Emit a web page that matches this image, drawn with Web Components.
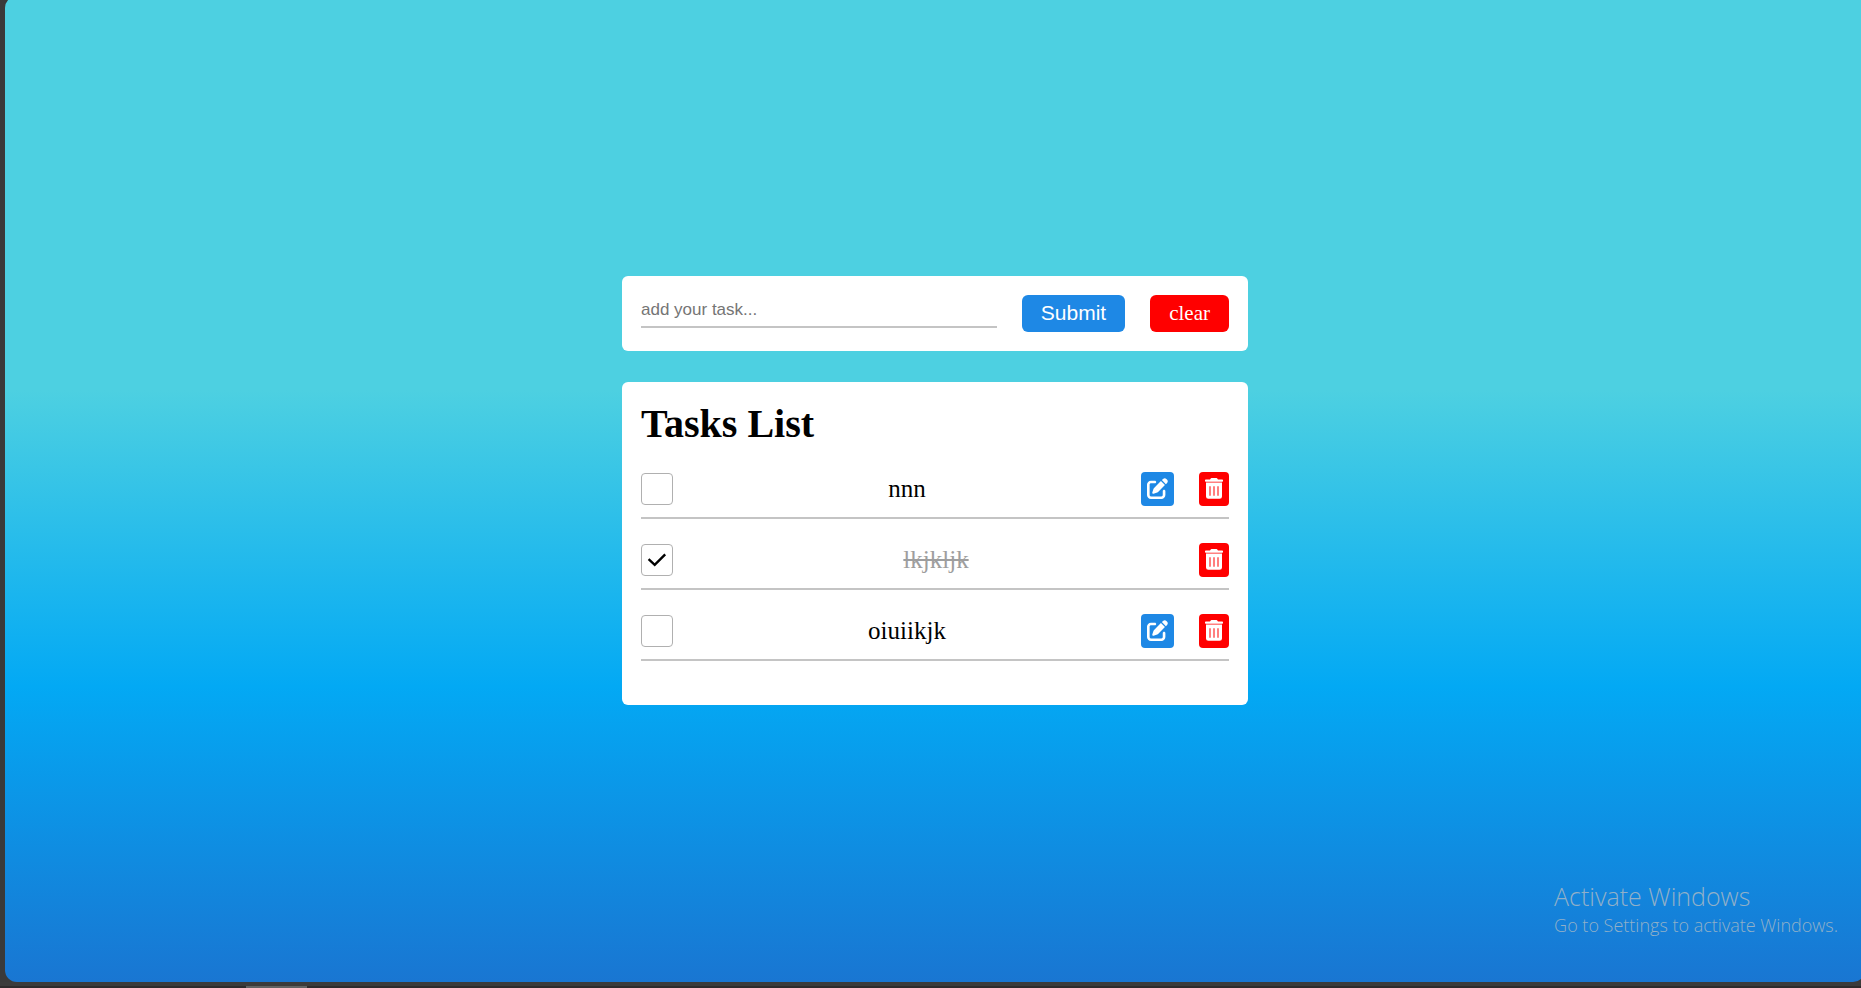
<!DOCTYPE html>
<html lang="en">
<head>
<meta charset="utf-8">
<title>Tasks List</title>
<style>
html { height: 100%; }
body {
  margin: 0;
  min-height: 100%;
  display: flex;
  overflow: hidden;
  background: #3a3a3a;
  font-family: "Liberation Serif", "Times New Roman", serif;
  color: #000;
}
</style>
</head>
<body>
<task-app></task-app>

<script>
const define = (name, html, Base = HTMLElement) => {
  const template = document.createElement("template");
  template.innerHTML = html;
  customElements.define(name, class extends Base {
    constructor() {
      super();
      this.attachShadow({ mode: "open" }).append(template.content.cloneNode(true));
    }
    connectedCallback() { this.setup?.(); }
  });
};

/* White rounded panel */
define("task-card", `
<style>
:host { display: block; padding: 19px; background: #fff; border-radius: 6px; }
</style>
<slot></slot>`);

/* New-task form */
define("task-form", `
<style>
:host { display: block; }
form { display: flex; gap: 25px; align-items: flex-start; }
input {
  flex: 1; min-width: 0; height: 33px; box-sizing: border-box;
  margin: 0; padding: 0; border: 0; border-bottom: 2px solid #c4c4c4;
  background: none; outline: none;
  font: 17px "Liberation Sans", Arial, sans-serif;
}
input::placeholder { color: #757575; opacity: 1; }
button {
  height: 37px; padding: 0 19px; border: 0; border-radius: 6px;
  color: #fff; background: #1e88e5;
  font: 21px "Liberation Sans", Arial, sans-serif;
}
button.clear { background: #f00; font-family: "Liberation Serif", "Times New Roman", serif; }
</style>
<form>
  <input type="text" placeholder="add your task..." aria-label="New task">
  <button type="submit">Submit</button>
  <button type="button" class="clear">clear</button>
</form>`);

/* One task with a tick box, a label and its actions */
class TaskBase extends HTMLElement {
  setup() {
    const done = this.hasAttribute("done");
    this.shadowRoot.querySelector("input").checked = done;
    if (done) this.shadowRoot.querySelector(".edit")?.remove();
  }
}
define("task-item", `
<style>
:host { display: block; border-bottom: 2px solid #c4c4c4; padding-bottom: 11px; }
.row { display: flex; align-items: center; height: 34px; }
.box { display: grid; }
.box > * { grid-area: 1 / 1; }
input {
  appearance: none; width: 32px; height: 32px; margin: 0;
  border: 1px solid #b0b0b0; border-radius: 4px; background: #fff;
}
.tick { width: 32px; height: 32px; visibility: hidden; pointer-events: none; }
input:checked + .tick { visibility: visible; }
label { flex: 1; text-align: center; font-size: 25px; line-height: 28px; }
:host([done]) label { color: #9e9e9e; text-decoration: line-through; }
.actions { display: flex; gap: 25px; }
button {
  display: flex; align-items: center; justify-content: center;
  height: 34px; padding: 0 6px; border: 0; border-radius: 4px;
  color: #fff; background: #1e88e5;
}
button.delete { background: #f00; }
button svg { display: block; height: 21px; fill: currentColor; }
</style>
<div class="row">
  <div class="box">
    <input type="checkbox" id="done">
    <svg class="tick" viewBox="0 0 32 32" fill="none" stroke="#000" stroke-width="2.4"><path d="M7.6 15.2 13.7 20.8 24.2 10.4"/></svg>
  </div>
  <label for="done"><slot></slot></label>
  <div class="actions">
    <button type="button" class="edit" aria-label="Edit">
      <svg width="21" viewBox="0 0 512 512"><path d="M471.6 21.7c-21.9-21.9-57.3-21.9-79.2 0L362.3 51.7l97.9 97.9 30.1-30.1c21.9-21.9 21.9-57.3 0-79.2L471.6 21.7zm-299.2 220c-6.1 6.1-10.8 13.6-13.5 21.9l-29.6 88.8c-2.9 8.6-.6 18.1 5.8 24.6s15.9 8.7 24.6 5.8l88.8-29.6c8.2-2.7 15.7-7.4 21.9-13.5L437.7 172.3 339.7 74.3 172.4 241.7zM96 64C43 64 0 107 0 160V416c0 53 43 96 96 96H352c53 0 96-43 96-96V320c0-17.7-14.3-32-32-32s-32 14.3-32 32v96c0 17.7-14.3 32-32 32H96c-17.7 0-32-14.3-32-32V160c0-17.7 14.3-32 32-32h96c17.7 0 32-14.3 32-32s-14.3-32-32-32H96z"/></svg>
    </button>
    <button type="button" class="delete" aria-label="Delete">
      <svg width="18" viewBox="0 0 18 21"><path fill-rule="evenodd" d="M5.400 .9Q5.800 .1 6.600 .1H11.400Q12.200 .1 12.600 .9L13 1.400H17.200Q18 1.400 18 2.200V3Q18 3.700 17.200 3.700H.8Q0 3.700 0 3V2.200Q0 1.400 .8 1.400H5ZM1 4.600H17V18.400Q17 20.800 14.600 20.800H3.400Q1 20.800 1 18.400ZM4.500 8.300V17.800H5.500V8.300ZM8.500 8.300V17.800H9.500V8.300ZM12.500 8.300V17.800H13.500V8.300Z"/></svg>
    </button>
  </div>
</div>`, TaskBase);

/* Titled list of tasks */
define("task-list", `
<style>
:host { display: block; }
h1 { margin: 0; font-size: 40px; line-height: 46px; font-weight: bold; }
.items { display: flex; flex-direction: column; gap: 24px; padding: 25px 0; }
</style>
<h1>Tasks List</h1>
<div class="items"><slot></slot></div>`);

/* Operating system notice lying over the page */
define("system-notice", `
<style>
:host {
  display: block; position: absolute; right: 27px; bottom: 45px;
  font-family: "Open Sans", "Noto Sans", sans-serif; color: #91b0c8;
  white-space: nowrap; pointer-events: none;
}
p { margin: 0; }
.title { font-size: 25px; line-height: 34px; font-weight: 300; }
.text { font-size: 18px; line-height: 24px; font-weight: 300; }
</style>
<p class="title">Activate Windows</p>
<p class="text">Go to Settings to activate Windows.</p>`);

define("task-app", `
<style>
:host { flex: 1; display: flex; flex-direction: column; min-width: 0; }
main {
  position: relative; flex: 1; box-sizing: border-box;
  margin: -4px -4px 0 5px; padding: 26px 24px 24px;
  display: flex; flex-direction: column; align-items: center; justify-content: center; gap: 31px;
  border-radius: 12px;
  background: linear-gradient(#4dd0e1 40%, #03a9f4 70%, #1976d2);
}
task-card { width: 100%; max-width: 626px; box-sizing: border-box; }
footer { height: 6px; display: flex; align-items: flex-end; background: linear-gradient(#3b3b3b 4px, #2e2b2c 4px); }
.tab { width: 61px; height: 2px; margin-left: 246px; background: #636363; }
</style>
<main>
  <task-card><task-form></task-form></task-card>
  <task-card>
    <task-list>
      <task-item>nnn</task-item>
      <task-item done>lkjkljk</task-item>
      <task-item>oiuiikjk</task-item>
    </task-list>
  </task-card>
  <system-notice></system-notice>
</main>
<footer><div class="tab"></div></footer>`);
</script>
</body>
</html>
